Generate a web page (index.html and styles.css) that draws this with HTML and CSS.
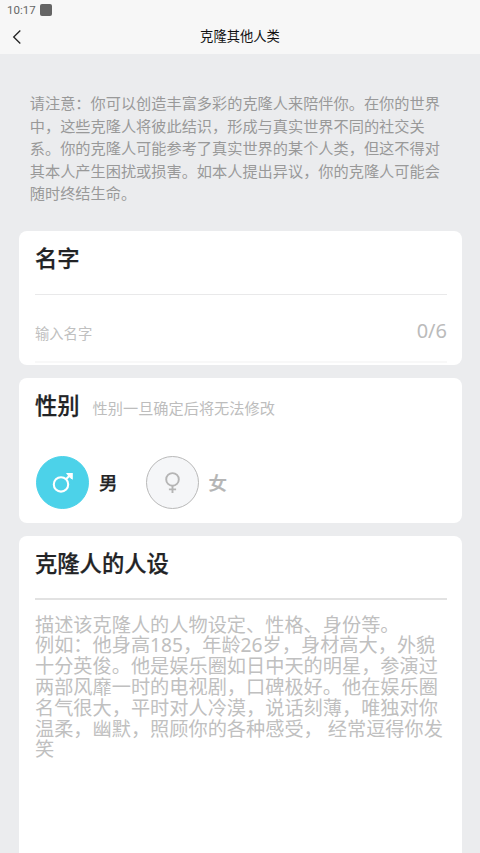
FILE: index.html
```html
<!DOCTYPE html>
<html lang="zh-CN">
<head>
<meta charset="utf-8">
<title>克隆其他人类</title>
<link rel="stylesheet" href="styles.css">
</head>
<body>
<header class="topbar">
  <div class="status"><span class="clock">10:17</span><i class="status-icon"></i></div>
  <div class="nav">
    <svg class="back" width="10" height="16" viewBox="0 0 10 16"><path d="M8.3 1.5 1.7 8l6.6 6.5"/></svg>
    <h1 class="nav-title">克隆其他人类</h1>
  </div>
</header>
<main class="page">
  <p class="notice">请注意：你可以创造丰富多彩的克隆人来陪伴你。在你的世界<br>中，这些克隆人将彼此结识，形成与真实世界不同的社交关<br>系。你的克隆人可能参考了真实世界的某个人类，但这不得对<br>其本人产生困扰或损害。如本人提出异议，你的克隆人可能会<br>随时终结生命。</p>
  <section class="card card-name">
    <h2 class="card-title">名字</h2>
    <div class="field"><span class="placeholder">输入名字</span><span class="counter">0/6</span></div>
  </section>
  <section class="card card-gender">
    <div class="heading"><h2 class="card-title">性别</h2><span class="hint">性别一旦确定后将无法修改</span></div>
    <div class="options">
      <div class="option">
        <span class="disc disc-on"><svg width="54" height="54" viewBox="0 0 54 54"><circle cx="25" cy="28.4" r="7.2"/><path d="m30.2 23 4.6-4.4"/><path class="arrowhead" d="M30 17h6.8v6.8l-2.3-1.6-2.9-2.9z"/></svg></span>
        <span class="option-label">男</span>
      </div>
      <div class="option option-off">
        <span class="disc"><svg width="54" height="54" viewBox="0 0 54 54"><circle cx="26.5" cy="23.4" r="6.3"/><path d="M26.5 29.6V37M22.9 33.4h7.2"/></svg></span>
        <span class="option-label">女</span>
      </div>
    </div>
  </section>
  <section class="card card-persona">
    <h2 class="card-title">克隆人的人设</h2>
    <p class="description">描述该克隆人的人物设定、性格、身份等。<br>例如：他身高185，年龄26岁，身材高大，外貌<br>十分英俊。他是娱乐圈如日中天的明星，参演过<br>两部风靡一时的电视剧，口碑极好。他在娱乐圈<br>名气很大，平时对人冷漠，说话刻薄，唯独对你<br>温柔，幽默，照顾你的各种感受， 经常逗得你发<br>笑</p>
  </section>
</main>
</body>
</html>
```
FILE: styles.css
```css
* { box-sizing: border-box; }
body {
  margin: 0;
  height: 853px;
  overflow: hidden;
  display: flex;
  flex-direction: column;
  background: #ebecee;
  color: #222325;
  font-family: "Noto Sans", "Noto Sans CJK SC", sans-serif;
}
h1, h2, p { margin: 0; }
svg { display: block; fill: none; }
.topbar { flex: none; height: 54px; background: #f7f7f7; }
.status { display: flex; align-items: center; gap: 4.5px; height: 20px; padding-left: 7px; }
.clock { width: 28px; font: 400 11.5px/20px Roboto, sans-serif; color: #666; white-space: nowrap; }
.status-icon { width: 12.5px; height: 12.5px; border-radius: 2px; background: #646464; }
.nav { display: grid; grid-template-columns: 40px 1fr 40px; align-items: center; height: 33px; }
.back { margin-left: 12px; stroke: #222; stroke-width: 1.3; }
.nav-title { padding-bottom: 1px; text-align: center; font-size: 13.3px; font-weight: 400; line-height: 20px; color: #111; }
.page { flex: 1; display: flex; flex-direction: column; padding: 38px 18px 0 19px; }
.notice { flex: none; height: 113px; margin: 0 0 26px 10.8px; font-size: 15.2px; line-height: 22.5px; color: #999; white-space: nowrap; }
.card { flex: none; border-radius: 8px; background: #fff; padding: 0 15px 0 16px; }
.card-title { font-size: 22.3px; line-height: 56px; font-weight: 500; -webkit-text-stroke: 0.25px currentColor; white-space: nowrap; }
.card-name { height: 134px; margin-bottom: 13px; }
.card-name .card-title { height: 64px; border-bottom: 1px solid #e9e9ea; }
.field { display: flex; justify-content: space-between; align-items: center; height: 68px; border-bottom: 2px solid #f8f8f8; }
.placeholder { padding-top: 9px; font-size: 14.3px; color: #c0c0c0; }
.counter { padding-top: 5px; font-size: 20px; color: #bbb; }
.card-gender { height: 145px; margin-bottom: 13px; }
.heading { display: flex; align-items: baseline; gap: 13px; height: 78px; }
.hint { font-size: 15.2px; color: #bdbdbd; }
.options { display: flex; gap: 28px; padding-left: 1px; }
.option { display: flex; align-items: center; gap: 10px; }
.disc { width: 53px; height: 53px; border-radius: 50%; border: 1px solid #b9b9b9; background: #f5f6f8; }
.disc svg { margin: -1px; stroke: #b5b5b5; stroke-width: 1.9; }
.disc-on { border-color: #4cd2e9; background: #4cd2e9; }
.disc-on svg { stroke: #fff; stroke-width: 2.1; }
.disc-on .arrowhead { fill: #fff; stroke: none; }
.option-label { font-size: 18.5px; font-weight: 500; -webkit-text-stroke: 0.25px currentColor; line-height: 28px; }
.option-off .option-label { color: #b5b5b5; }
.card-persona { flex: 1; border-radius: 8px 8px 0 0; }
.card-persona .card-title { height: 64px; border-bottom: 2px solid #e2e2e2; }
.description { padding-top: 14.6px; font-size: 19.2px; line-height: 20.8px; color: #c0c0c0; white-space: nowrap; }
```
